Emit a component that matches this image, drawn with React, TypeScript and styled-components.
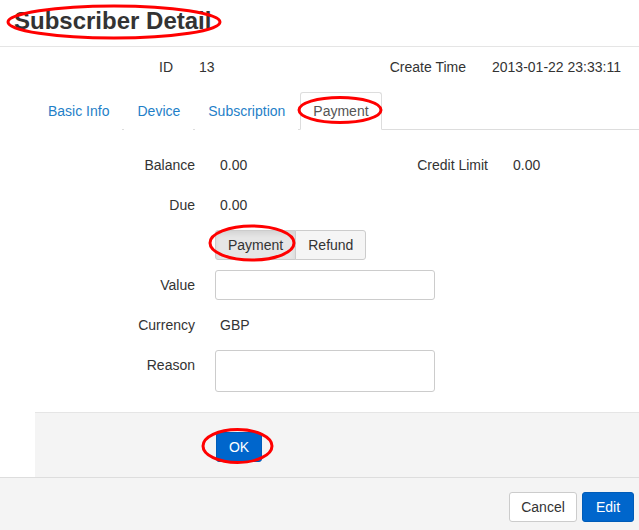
import React from "react";
import styled, { createGlobalStyle } from "styled-components";

const Global = createGlobalStyle`
  html, body { margin: 0; padding: 0; background: #fff; }
  body { font-family: "Liberation Sans", Arial, sans-serif; font-size: 14px; color: #333; }
  * { box-sizing: border-box; }
`;

const Page = styled.div`
  position: relative;
  width: 639px;
  height: 530px;
  overflow: hidden;
  display: flex;
  flex-direction: column;
`;

const Header = styled.div`
  height: 47px;
  flex: none;
  border-bottom: 1px solid #e5e5e5;
  display: flex;
  align-items: center;
  padding-left: 14px;
`;

const Title = styled.h1`
  margin: 0;
  font-size: 24px;
  font-weight: bold;
  color: #333;
  line-height: 1;
  margin-top: -5px;
`;

const Body = styled.div`
  height: 430px;
  flex: none;
  overflow: hidden;
  padding: 5px 0 0 35px;
`;

const InfoRow = styled.div`
  display: grid;
  grid-template-columns: 138px 103px 138px 1fr;
  column-gap: 26px;
  height: 30px;
  align-items: center;
  white-space: nowrap;
`;

const Label = styled.div`
  text-align: right;
  white-space: nowrap;
`;

const Value = styled.div<{ $pad?: boolean }>`
  padding-left: ${(p) => (p.$pad ? "5px" : "0")};
  white-space: nowrap;
`;

const Tabs = styled.div`
  margin-top: 10px;
  display: flex;
  border-bottom: 1px solid #ddd;
  height: 38px;
`;

const Tab = styled.div<{ $active?: boolean }>`
  height: 38px;
  padding: 0 12px;
  margin-right: 2px;
  display: flex;
  align-items: center;
  border: 1px solid ${(p) => (p.$active ? "#ddd" : "transparent")};
  border-bottom-color: ${(p) => (p.$active ? "#fff" : "transparent")};
  border-radius: 3px 3px 0 0;
  background: #fff;
  color: ${(p) => (p.$active ? "#555" : "#1f7fc8")};
  margin-top: ${(p) => (p.$active ? "0" : "0")};
`;

const Form = styled.div`
  padding: 20px 0 20px 0;
  display: grid;
  grid-template-columns: 160px 93px 160px 1fr;
  column-gap: 20px;
  row-gap: 10px;
`;

const FormLabel = styled(Label)<{ $top?: boolean }>`
  line-height: 30px;
  height: 30px;
`;

const FormValue = styled.div<{ $span?: boolean }>`
  line-height: 30px;
  padding-left: 5px;
  white-space: nowrap;
  grid-column: ${(p) => (p.$span ? "2 / span 3" : "auto")};
`;

const Field = styled.div`
  grid-column: 2 / span 3;
  display: flex;
`;

const Group = styled.div`
  display: flex;
  height: 30px;
`;

const GroupButton = styled.div<{ $active?: boolean; $first?: boolean }>`
  height: 30px;
  padding: 0 12px;
  display: flex;
  align-items: center;
  border: 1px solid #ccc;
  background: ${(p) => (p.$active ? "#e6e6e6" : "#f5f5f5")};
  box-shadow: ${(p) => (p.$active ? "inset 0 3px 5px rgba(0,0,0,0.08)" : "none")};
  border-radius: ${(p) => (p.$first ? "3px 0 0 3px" : "0 3px 3px 0")};
  margin-left: ${(p) => (p.$first ? "0" : "-1px")};
  color: #333;
`;

const Input = styled.div<{ $h: number }>`
  width: 220px;
  height: ${(p) => p.$h}px;
  border: 1px solid #ccc;
  border-radius: 3px;
  background: #fff;
`;

const ActionBar = styled.div`
  background: #f4f4f4;
  border-top: 1px solid #e5e5e5;
  padding: 19px 0 40px 181px;
  display: flex;
`;

const PrimaryButton = styled.div<{ $w: number }>`
  width: ${(p) => p.$w}px;
  height: 30px;
  display: flex;
  align-items: center;
  justify-content: center;
  background: #0066cc;
  color: #fff;
  border: 1px solid #005cb8;
  border-radius: 3px;
`;

const DefaultButton = styled.div`
  width: 68px;
  height: 30px;
  display: flex;
  align-items: center;
  justify-content: center;
  background: #fff;
  color: #333;
  border: 1px solid #ccc;
  border-radius: 3px;
`;

const Footer = styled.div`
  flex: 1;
  background: #f4f4f4;
  border-top: 1px solid #ddd;
  display: flex;
  justify-content: flex-end;
  align-items: flex-start;
  gap: 5px;
  padding: 14px 5px 0 0;
`;

const Marks = styled.svg`
  position: absolute;
  left: 0;
  top: 0;
  pointer-events: none;
`;

export default function App() {
  return (
    <>
      <Global />
      <Page>
        <Header>
          <Title>Subscriber Detail</Title>
        </Header>
        <Body>
          <InfoRow>
            <Label>ID</Label>
            <Value>13</Value>
            <Label>Create Time</Label>
            <Value>2013-01-22 23:33:11</Value>
          </InfoRow>
          <Tabs>
            <Tab>Basic Info</Tab>
            <Tab>Device</Tab>
            <Tab>Subscription</Tab>
            <Tab $active>Payment</Tab>
          </Tabs>
          <Form>
            <FormLabel>Balance</FormLabel>
            <FormValue>0.00</FormValue>
            <FormLabel>Credit Limit</FormLabel>
            <FormValue>0.00</FormValue>

            <FormLabel>Due</FormLabel>
            <FormValue $span>0.00</FormValue>

            <div />
            <Field>
              <Group>
                <GroupButton $active $first>Payment</GroupButton>
                <GroupButton>Refund</GroupButton>
              </Group>
            </Field>

            <FormLabel>Value</FormLabel>
            <Field>
              <Input $h={30} />
            </Field>

            <FormLabel>Currency</FormLabel>
            <FormValue $span>GBP</FormValue>

            <FormLabel>Reason</FormLabel>
            <Field>
              <Input $h={42} />
            </Field>
          </Form>
          <ActionBar>
            <PrimaryButton $w={46}>OK</PrimaryButton>
          </ActionBar>
        </Body>
        <Footer>
          <DefaultButton>Cancel</DefaultButton>
          <PrimaryButton $w={52}>Edit</PrimaryButton>
        </Footer>
        <Marks width="639" height="530" viewBox="0 0 639 530">
          <g fill="none" stroke="#ff0000" strokeWidth="3">
            <ellipse cx="114" cy="22" rx="106" ry="16" />
            <ellipse cx="340" cy="110" rx="41" ry="12.5" />
            <ellipse cx="252" cy="243" rx="42" ry="17" />
            <ellipse cx="237.5" cy="446" rx="34.5" ry="16.5" />
          </g>
        </Marks>
      </Page>
    </>
  );
}
